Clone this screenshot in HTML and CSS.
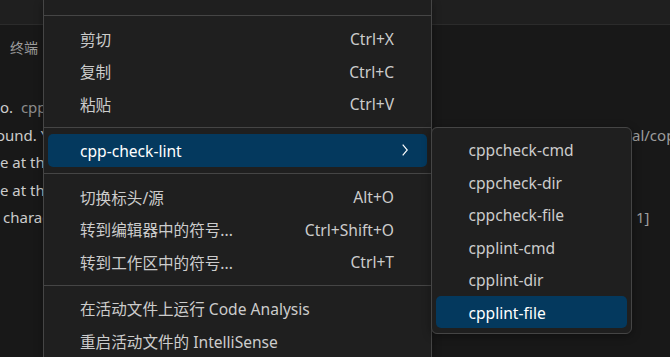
FILE: index.html
```html
<!DOCTYPE html>
<html lang="zh-CN">
<head>
<meta charset="utf-8">
<title>Context menu</title>
<link rel="stylesheet" href="styles.css">
</head>
<body>
<div class="workbench">
  <div class="topbar"></div>
  <div class="panel">
    <div class="panel-tabs"><span class="tab">终端</span></div>
    <div class="terminal">
      <div class="tline"><span class="tl">o.&nbsp; <span class="dim">cppcheck</span></span><span class="tr"></span></div>
      <div class="tline"><span class="tl"><span class="shift">ound. You</span></span><span class="tr dim2">al/cop</span></div>
      <div class="tline"><span class="tl">e at the</span><span class="tr"></span></div>
      <div class="tline"><span class="tl">e at the</span><span class="tr"></span></div>
      <div class="tline"><span class="tl tl-indent">characters</span><span class="tr dim2 tr-indent">1]</span></div>
    </div>
  </div>
</div>

<div class="menu">
  <div class="sep"></div>
  <div class="item"><span>剪切</span><span class="kb">Ctrl+X</span></div>
  <div class="item"><span>复制</span><span class="kb">Ctrl+C</span></div>
  <div class="item"><span>粘贴</span><span class="kb">Ctrl+V</span></div>
  <div class="sep"></div>
  <div class="item active"><span>cpp-check-lint</span><svg class="chev" width="6" height="12" viewBox="0 0 6 12"><path d="M0.7 0.7 L5.3 6 L0.7 11.3" fill="none" stroke="#ffffff" stroke-width="1.2"/></svg></div>
  <div class="sep"></div>
  <div class="item"><span>切换标头/源</span><span class="kb">Alt+O</span></div>
  <div class="item"><span>转到编辑器中的符号...</span><span class="kb">Ctrl+Shift+O</span></div>
  <div class="item"><span>转到工作区中的符号...</span><span class="kb">Ctrl+T</span></div>
  <div class="sep"></div>
  <div class="item"><span>在活动文件上运行 Code Analysis</span></div>
  <div class="item"><span>重启活动文件的 IntelliSense</span></div>
</div>

<div class="submenu">
  <div class="item sub"><span>cppcheck-cmd</span></div>
  <div class="item sub"><span>cppcheck-dir</span></div>
  <div class="item sub"><span>cppcheck-file</span></div>
  <div class="item sub"><span>cpplint-cmd</span></div>
  <div class="item sub"><span>cpplint-dir</span></div>
  <div class="item sub active"><span>cpplint-file</span></div>
</div>
</body>
</html>
```
FILE: styles.css
```css
html, body {
  margin: 0;
  padding: 0;
}
body {
  width: 670px;
  height: 357px;
  overflow: hidden;
  position: relative;
  background: #181818;
  font-family: "Noto Sans", "Noto Sans CJK SC", sans-serif;
  font-size: 15.6px;
  color: #cccccc;
}
.workbench {
  display: flex;
  flex-direction: column;
  height: 357px;
}
.topbar {
  height: 24px;
  background: #1f1f1f;
  border-bottom: 1px solid #2b2b2b;
}
.panel {
  flex: 1;
  background: #181818;
}
.panel-tabs {
  height: 44px;
  display: flex;
  align-items: center;
  padding-left: 10px;
}
.tab {
  font-family: "Noto Sans CJK SC", sans-serif;
  font-size: 14px;
  color: #9d9d9d;
}
.terminal {
  padding-top: 25px;
  line-height: 27.5px;
  font-size: 15px;
}
.tline {
  display: grid;
  grid-template-columns: 632px auto;
  white-space: nowrap;
}
.tl {
  width: 43px;
  overflow: hidden;
}
.shift {
  display: inline-block;
  margin-left: -4px;
}
.tl-indent {
  padding-left: 3px;
  width: 40px;
}
.tr-indent {
  padding-left: 4px;
}
.dim { color: #8c8c8c; }
.dim2 { color: #9d9d9d; }

.menu {
  position: absolute;
  left: 43px;
  top: 0;
  height: 357px;
  box-sizing: border-box;
  width: 389px;
  padding-top: 8.5px;
  background: #1f1f1f;
  border-left: 1px solid #454545;
  border-right: 1px solid #454545;
  box-shadow: 0 2px 8px rgba(0, 0, 0, 0.36);
}
.sep {
  border-top: 1px solid #454545;
  margin: 6.5px 0;
}
.item {
  height: 32.5px;
  margin: 0 4px;
  padding: 1px 33px 0 32px;
  box-sizing: border-box;
  display: flex;
  align-items: center;
  justify-content: space-between;
  border-radius: 5px;
  white-space: nowrap;
}
.item.active {
  background: #04395e;
  color: #ffffff;
}
.chev {
  margin-right: -14px;
  margin-top: -2px;
  display: block;
}
.submenu {
  position: absolute;
  left: 431px;
  top: 127px;
  width: 201px;
  box-sizing: border-box;
  padding: 5px 0;
  background: #1f1f1f;
  border: 1px solid #454545;
  border-radius: 6px;
  box-shadow: 0 2px 8px rgba(0, 0, 0, 0.36);
}
.item.sub {
  padding: 2px 0 0 32.5px;
  justify-content: flex-start;
}
```
